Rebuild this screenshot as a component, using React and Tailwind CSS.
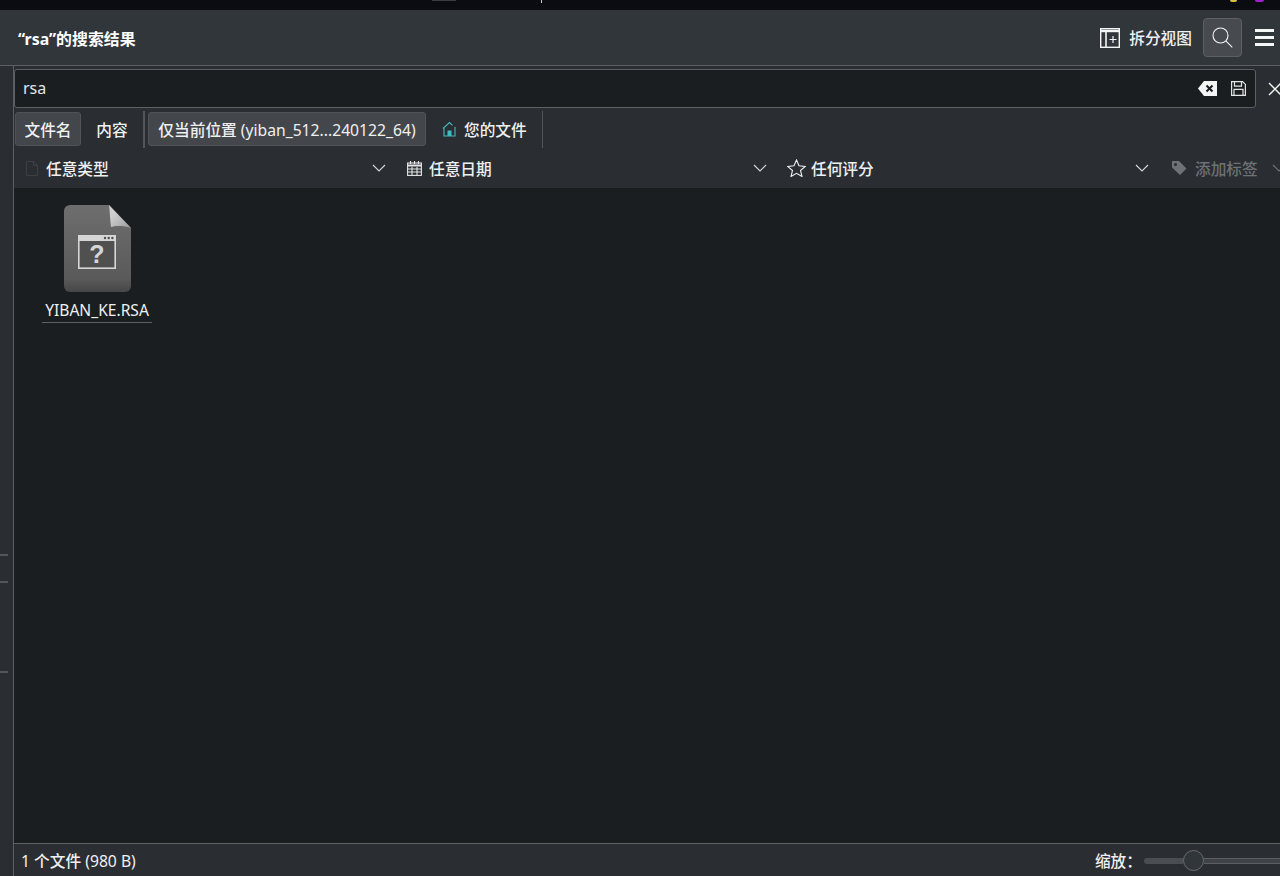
import React from 'react'

const font = { fontFamily: '"Noto Sans", "Noto Sans CJK SC", sans-serif' }

const Chevron = ({ className = '' }) => (
  <svg width="14" height="8" viewBox="0 0 14 8" fill="none" stroke="#d5d7d8" strokeWidth="1.1" className={className}>
    <path d="M1 1l6 6 6-6" />
  </svg>
)

const FilterCell = ({ icon, label, width, muted }) => (
  <div className={`flex items-center shrink-0 ${width}`}>
    <div className="w-[19px] flex justify-center shrink-0">{icon}</div>
    <span className={`ml-[5px] mt-[3px] text-[15.7px] font-medium ${muted ? 'text-[#6e7175]' : 'text-[#eff0f1]'}`}>{label}</span>
    <div className="flex-1" />
    <Chevron />
  </div>
)

const FileIcon = () => (
  <svg width="70" height="90" viewBox="0 0 70 90">
    <defs>
      <linearGradient id="body" x1="0" y1="0" x2="0" y2="1">
        <stop offset="0" stopColor="#6e6e6e" />
        <stop offset="0.85" stopColor="#5a5a5a" />
        <stop offset="1" stopColor="#464646" />
      </linearGradient>
      <linearGradient id="fold" x1="0" y1="0" x2="1" y2="1">
        <stop offset="0.3" stopColor="#cfcfcf" />
        <stop offset="1" stopColor="#9a9a9a" />
      </linearGradient>
    </defs>
    <path d="M7 1h39l22 23v58a6 6 0 0 1-6 6H7a6 6 0 0 1-6-6V7a6 6 0 0 1 6-6z" fill="url(#body)" />
    <path d="M46 1l22 23c-8-3-17-2-20-1-1-7-1-15-2-22z" fill="url(#fold)" />
    <rect x="15.800" y="31.800" width="36.400" height="32.400" fill="#505050" stroke="#d6d6d6" strokeWidth="1.6" />
    <rect x="15" y="31" width="38" height="6" fill="#d6d6d6" />
    <circle cx="42" cy="34" r="1.200" fill="#505050" />
    <circle cx="45.700" cy="34" r="1.200" fill="#505050" />
    <circle cx="49.400" cy="34" r="1.200" fill="#505050" />
    <text x="34" y="59" textAnchor="middle" fontSize="25" fontWeight="700" fill="#d6d6d6" fontFamily="Liberation Sans, sans-serif">?</text>
  </svg>
)

export default function App() {
  return (
    <div className="w-[1280px] h-[876px] flex flex-col overflow-hidden bg-[#2a2e32] text-[#eff0f1]" style={font}>
      {/* window strip, almost all cropped off */}
      <div className="h-[10px] shrink-0 bg-[#0a0c11] flex items-start">
        <div className="ml-[432px] w-[24px] h-[1px] bg-[#3a3c40]" />
        <div className="ml-[85px] w-[1px] h-[3px] bg-[#c8c8c8]" />
        <div className="ml-[688px] w-[7px] h-[2px] rounded-b-full bg-[#d8c23a]" />
        <div className="ml-[18px] w-[9px] h-[2px] rounded-b-full bg-[#a020d0]" />
      </div>

      {/* header */}
      <div className="h-[56px] shrink-0 bg-[#31363b] border-b border-[#5c6064] flex items-center pl-[18px] pr-[6px]">
        <span className="text-[15.9px] font-bold text-white mt-[4px]">“rsa”的搜索结果</span>
        <div className="flex-1" />
        <svg width="20" height="20" viewBox="0 0 20 20" fill="none" stroke="#f4f5f5" strokeWidth="1.4">
          <rect x="0.700" y="0.700" width="18.600" height="18.600" />
          <path d="M0.700 3h18.600" strokeWidth="2.400" />
          <path d="M6 3.500v16" strokeWidth="1.600" />
          <path d="M13 8v7M9.500 11.500h7" strokeWidth="1.200" />
        </svg>
        <span className="ml-[9px] mt-[3px] text-[15.7px] font-medium text-[#eff0f1]">拆分视图</span>
        <div className="ml-[11px] w-[39px] h-[39px] rounded-[4px] bg-[#474b50] border border-[#5c6064] flex items-center justify-center">
          <svg width="21" height="21" viewBox="0 0 21 21" fill="none" stroke="#f4f5f5" strokeWidth="1.100">
            <circle cx="8.500" cy="8.500" r="7.500" />
            <path d="M13.800 13.800l6.500 6.500" />
          </svg>
        </div>
        <div className="ml-[13px] w-[19px] flex flex-col gap-[4px]">
          <div className="h-[3px] bg-[#f4f5f5]" />
          <div className="h-[3px] bg-[#f4f5f5]" />
          <div className="h-[3px] bg-[#f4f5f5]" />
        </div>
      </div>

      <div className="flex-1 flex min-h-0">
        {/* collapsed sidebar */}
        <div className="w-[14px] shrink-0 border-r border-[#5c6064] flex flex-col pt-[488px]">
          <div className="w-[8px] h-[2px] bg-[#53575b]" />
          <div className="mt-[25px] w-[8px] h-[2px] bg-[#53575b]" />
          <div className="mt-[88px] w-[8px] h-[2px] bg-[#53575b]" />
        </div>

        <div className="flex-1 min-w-0 flex flex-col">
          {/* search row */}
          <div className="flex items-center mt-[3px] h-[39px] shrink-0">
            <div className="w-[1242px] h-[39px] shrink-0 rounded-[3px] bg-[#1b1e20] border border-[#5c6064] flex items-center pl-[8px] pr-[9px]">
              <span className="text-[16px] text-[#e4e5e6] mb-[2px]">rsa</span>
              <div className="flex-1" />
              <svg width="19" height="15" viewBox="0 0 19 15">
                <path d="M6 0h13v15H6L0 7.500z" fill="#f4f5f5" />
                <path d="M8.500 4.500l6 6M14.500 4.500l-6 6" stroke="#1b1e20" strokeWidth="2" />
              </svg>
              <svg width="15" height="15" viewBox="0 0 15 15" fill="none" stroke="#e4e5e6" strokeWidth="1.200" className="ml-[14px]">
                <path d="M0.600 0.600h11l2.800 2.800v11H0.600z" />
                <path d="M3.500 0.600v4.500h7v-4.500M3 14.400v-6h9v6" />
              </svg>
            </div>
            <svg width="14" height="14" viewBox="0 0 14 14" stroke="#f4f5f5" strokeWidth="1.400" className="ml-[12px] shrink-0">
              <path d="M1 1l12 12M13 1L1 13" />
            </svg>
          </div>

          {/* location tabs */}
          <div className="flex items-start mt-[3px] h-[37px] shrink-0 text-[15.7px] font-medium">
            <div className="mt-[1px] ml-[1px] w-[66px] h-[34px] pt-[3px] rounded-[3px] bg-[#43474c] border border-[#505458] flex items-center justify-center">文件名</div>
            <div className="w-[62px] h-[36px] pt-[3px] flex items-center justify-center">内容</div>
            <div className="w-[2px] h-[37px] bg-[#53575b]" />
            <div className="mt-[1px] ml-[3px] w-[278px] h-[34px] pt-[3px] rounded-[3px] bg-[#43474c] border border-[#505458] flex items-center justify-center whitespace-nowrap">
              仅当前位置<span className="font-normal ml-[4px]">(yiban_512...240122_64)</span>
            </div>
            <div className="ml-[16px] h-[36px] flex items-center">
              <svg width="15" height="16" viewBox="0 0 15 16" fill="none" stroke="#3fbcc0" strokeWidth="1.100">
                <path d="M1 7.500L7.500 1.500 10.500 4.300M12.500 6.200l1 1M2 7v8h11V7" />
                <rect x="5.500" y="9.500" width="4" height="5.500" fill="#3fbcc0" stroke="none" />
              </svg>
              <span className="ml-[7px] mt-[3px]">您的文件</span>
            </div>
            <div className="ml-[15px] w-[1px] h-[37px] bg-[#53575b]" />
          </div>

          {/* filter row */}
          <div className="flex items-center mt-[1px] h-[39px] shrink-0 pl-[8px] overflow-hidden">
            <FilterCell
              width="w-[364px]"
              label="任意类型"
              icon={
                <svg width="12" height="15" viewBox="0 0 12 15" fill="none" stroke="#3d4145" strokeWidth="1">
                  <path d="M0.500 0.500h7l4 4v10h-11zM7.500 0.500v4h4" />
                </svg>
              }
            />
            <div className="w-[19px] shrink-0" />
            <FilterCell
              width="w-[362px]"
              label="任意日期"
              icon={
                <svg width="15" height="15" viewBox="0 0 15 15" fill="none" stroke="#e4e5e6" strokeWidth="1.100">
                  <rect x="0.600" y="2" width="13.800" height="12.400" />
                  <path d="M0.600 4.500h13.800" strokeWidth="2" />
                  <path d="M3.500 0v3M7.500 0v3M11.500 0v3M0.600 8h13.800M0.600 11h13.800M5 6v8M10 6v8" />
                </svg>
              }
            />
            <div className="w-[20px] shrink-0" />
            <FilterCell
              width="w-[362px]"
              label="任何评分"
              icon={
                <svg width="19" height="18" viewBox="0 0 19 18" fill="none" stroke="#eff0f1" strokeWidth="1.100">
                  <path d="M9.500 1l2.500 5.800 6.300 0.600-4.800 4.100 1.500 6-5.500-3.200L4 17.500l1.500-6L0.700 7.400 7 6.800z" />
                </svg>
              }
            />
            <div className="ml-[22px] flex items-center shrink-0">
              <svg width="16" height="16" viewBox="0 0 16 16" fill="#6e7175">
                <path d="M1 1h7l7.500 7.500-6.500 6.500L1 7.500zM4.500 3a1.500 1.500 0 1 0 0 3 1.500 1.500 0 0 0 0-3z" fillRule="evenodd" />
              </svg>
              <span className="ml-[8px] mt-[3px] text-[15.7px] font-medium text-[#6e7175]">添加标签</span>
              <Chevron className="ml-[14px] opacity-40" />
            </div>
          </div>

          {/* results */}
          <div className="flex-1 min-h-0 bg-[#1b1e20] pl-[28px] pt-[16px]">
            <div className="w-[110px] flex flex-col items-center">
              <div className="ml-[2px]"><FileIcon /></div>
              <span className="mt-[6px] text-[15.6px] leading-[20px] text-[#eff0f1] whitespace-nowrap">YIBAN_KE.RSA</span>
              <div className="mt-[2px] w-[110px] h-[1px] bg-[#5c6064]" />
            </div>
          </div>

          {/* status bar */}
          <div className="h-[33px] shrink-0 border-t border-[#5c6064] flex items-center pl-[7px] text-[15.7px]">
            <span className="mt-[3px]">1 <span className="font-medium">个文件</span> (980 B)</span>
            <div className="flex-1" />
            <span className="font-medium mt-[3px]">缩放：</span>
            <div className="mt-[1px] ml-[2px] w-[136px] flex items-center overflow-hidden">
              <div className="w-[39px] h-[6px] shrink-0 rounded-l-full bg-[#4a4e52]" />
              <div className="w-[21px] h-[21px] shrink-0 rounded-full bg-[#31363b] border border-[#6a6e72]" />
              <div className="flex-1 h-[6px] bg-[#3f4347] border-y border-[#5c6064]" />
            </div>
          </div>
        </div>
      </div>
    </div>
  )
}
